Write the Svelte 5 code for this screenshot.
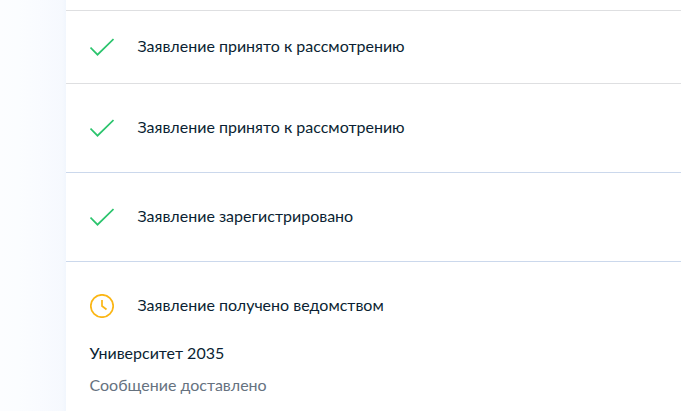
<script>
    const steps = [
        { title: 'Заявление принято к рассмотрению', done: true, compact: true },
        { title: 'Заявление принято к рассмотрению', done: true },
        { title: 'Заявление зарегистрировано', done: true, inner: true },
        {
            title: 'Заявление получено ведомством',
            done: false,
            inner: true,
            department: 'Университет 2035',
            message: 'Сообщение доставлено'
        }
    ]
</script>

<style>
    :global(body) {
        margin: 0;
        overflow: hidden;
    }

    .page {
        box-sizing: border-box;
        height: 411px;
        padding-left: 66px;
        overflow: hidden;
        background: linear-gradient(90deg, #fcfdff 0, #fbfdff 18px, #f9fbff 40px, #f6f9fe 62px, #f1f6fd 66px);
        font-family: Lato, sans-serif;
        font-size: 16px;
        line-height: 24px;
        color: #0b1f33;
    }

    .card {
        min-height: 401px;
        padding-top: 10px;
        background: white;
    }

    .step {
        padding: 32px 24px;
        border-top: 1px solid #dedfe1;
    }

    .inner {
        border-top-color: #cbd8ec;
    }

    .compact {
        padding: 24px;
    }

    .head {
        display: flex;
        align-items: center;
        gap: 23.5px;
    }

    svg {
        flex: none;
    }

    span {
        margin-top: -2px;
    }

    p {
        margin: 0 0 0 -0.5px;
    }

    .department {
        margin-top: 23px;
    }

    .message {
        margin-top: 8px;
        color: #66727f;
    }
</style>

<div class="page">
    <div class="card">
        {#each steps as step}
            <div class="step" class:compact={step.compact} class:inner={step.inner}>
                <div class="head">
                    <svg width="24" height="24" viewBox="0 0 24 24" fill="none">
                        {#if step.done}
                            <path d="M0.5 12.5L7.5 19.7L23.5 4" stroke="#2bc46d" stroke-width="1.7" />
                        {:else}
                            <circle cx="12" cy="12" r="11.2" stroke="#fbb615" stroke-width="1.7" />
                            <path d="M12 6V12L16.5 15.5" stroke="#fbb615" stroke-width="1.7" />
                        {/if}
                    </svg>
                    <span>{step.title}</span>
                </div>
                {#if step.department}
                    <p class="department">{step.department}</p>
                    <p class="message">{step.message}</p>
                {/if}
            </div>
        {/each}
    </div>
</div>
